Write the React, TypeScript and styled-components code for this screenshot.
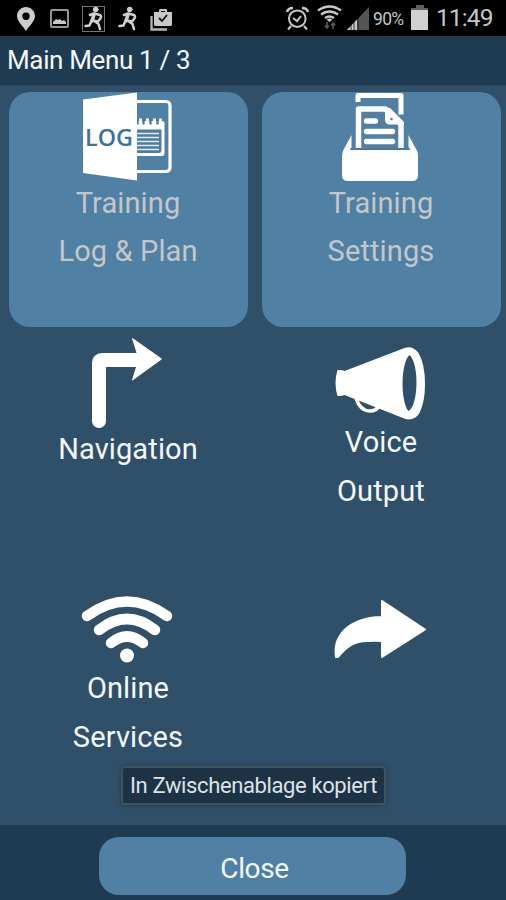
import React from "react";
import styled, { createGlobalStyle } from "styled-components";

const GlobalStyle = createGlobalStyle`
  * { box-sizing: border-box; }
  body { margin: 0; background: #2f5068; }
`;

const Screen = styled.div`
  position: relative;
  display: flex;
  flex-direction: column;
  width: 506px;
  height: 900px;
  overflow: hidden;
  background: #2f5068;
  color: #f4f8fc;
  font-family: Roboto, "Liberation Sans", sans-serif;
`;

const StatusBar = styled.header`
  display: flex;
  justify-content: space-between;
  height: 36px;
  background: #000;
  color: #c6c6c6;
`;

const StatusIcons = styled.svg`
  display: block;
  flex: none;
  height: 36px;
`;

const StatusGroup = styled.div`
  display: flex;
  align-items: center;
  padding-right: 13px;
`;

const BatteryLevel = styled.span`
  width: 34px;
  font-size: 17.5px;
  line-height: 36px;
  letter-spacing: -0.7px;
  padding-top: 2px;
`;

const Clock = styled.span`
  width: 57px;
  font-size: 24.5px;
  line-height: 36px;
  letter-spacing: -0.9px;
  white-space: nowrap;
`;

const TitleBar = styled.h1`
  height: 50px;
  margin: 0;
  padding-left: 7px;
  background: #1e3b52;
  border-bottom: 1px solid #28465d;
  font-size: 26px;
  font-weight: 400;
  line-height: 49px;
  letter-spacing: -0.35px;
`;

const MenuGrid = styled.main`
  display: grid;
  flex: 1;
  grid-template-columns: 239px 239px;
  grid-template-rows: repeat(3, 235px);
  gap: 11px 14px;
  padding: 6px 0 0 9px;
  overflow: hidden;
`;

const Tile = styled.button<{ $raised?: boolean }>`
  display: flex;
  flex-direction: column;
  align-items: center;
  padding: 0;
  border: 0;
  border-radius: 21px;
  background: ${(p) => (p.$raised ? "#5080a4" : "transparent")};
  color: ${(p) => (p.$raised ? "#c3c7ca" : "#f4f8fc")};
  font: inherit;
`;

const TileIcon = styled.svg`
  display: block;
  flex: none;
  width: 92px;
  margin-right: 1px;
  overflow: visible;
`;

const LabelGroup = styled.span<{ $gap?: number }>`
  display: flex;
  flex-direction: column;
  align-items: center;
  gap: ${(p) => p.$gap ?? 0}px;
  padding-top: 1px;
  margin-right: 1px;
`;

const Label = styled.span`
  font-size: 29px;
  line-height: 48px;
  letter-spacing: 0.12px;
  white-space: nowrap;
`;

const Footer = styled.footer`
  display: flex;
  justify-content: center;
  height: 75px;
  padding: 12px 0 5px;
  background: #1e3b52;
`;

const CloseButton = styled.button`
  width: 307px;
  height: 58px;
  margin-right: 2px;
  border: 0;
  border-radius: 20px;
  background: #5080a4;
  color: #f4f8fc;
  font: 400 28px/62px Roboto, "Liberation Sans", sans-serif;
  letter-spacing: -0.4px;
  padding: 1px 0 0 5px;
`;

const Toast = styled.div`
  position: absolute;
  left: 121px;
  top: 766px;
  width: 265px;
  height: 39px;
  border: 2px solid #3f5260;
  border-radius: 4px;
  background: #1d3345;
  color: #dce2e8;
  box-shadow: 0 0 4px rgba(18, 37, 51, 0.45);
  font-size: 22px;
  line-height: 36px;
  letter-spacing: -0.38px;
  text-align: center;
  white-space: nowrap;
`;

const Runner = () => (
  <g fill="none" stroke="#d0d0d0" strokeLinecap="round" strokeLinejoin="round">
    <circle cx="95.700" cy="9.500" r="2.400" fill="#d0d0d0" strokeWidth="1" />
    <path d="M94 14.500 92 21" strokeWidth="3.600" />
    <path d="M90 15l4-1.500 6 1.500q2 2 0 4l-2 2.500-5-1M91.500 20.500 89.500 25.500l-4 .5M95 21.500l3.500 2.500 1.500 5" strokeWidth="2.500" />
  </g>
);

const StatusLeft = () => (
  <StatusIcons width="180" viewBox="0 0 180 36">
    <path
      fill="#cccccc"
      fillRule="evenodd"
      d="M26 7c-5 0-9 4-9 9 0 5 5 9 9 15 4-6 9-10 9-15 0-5-4-9-9-9Zm0 5.500a3.700 3.700 0 1 1 0 7.400 3.700 3.700 0 0 1 0-7.400Z"
    />
    <rect x="51" y="10" width="17" height="17" rx="1" fill="none" stroke="#969696" strokeWidth="2" />
    <path fill="#c8c8c8" d="M53 24v-2l3-3 2 1 2-1 2 2 2-1 2 2v2Z" />
    <rect x="82.500" y="6.500" width="22" height="25" fill="none" stroke="#737373" />
    <Runner />
    <g transform="translate(34 0)"><Runner /></g>
    <path d="M151.500 16v13.500H167" fill="none" stroke="#b5b5b5" strokeWidth="2.300" />
    <path
      fill="#c8c8c8"
      fillRule="evenodd"
      d="M154 12h5v-2l1-1h6l1 1v2h5v13l-1 1h-16l-1-1Zm7-1v1h4v-1Z"
    />
    <path d="m159 18 3 3 5-6" fill="none" stroke="#111" strokeWidth="1.800" />
  </StatusIcons>
);

const StatusRight = () => (
  <StatusIcons width="90" viewBox="283 0 90 36">
    <g fill="none" stroke="#c8c8c8" strokeWidth="2">
      <circle cx="297.300" cy="18.700" r="8.300" />
      <path d="m293 18 4 3 4-5m-10 10-3 3.500m16-3.500 3 3.500" />
      <path d="M287 12q1-4 6-4m9 0q5 0 6 4" strokeWidth="2.500" />
    </g>
    <g fill="none" stroke="#c8c8c8" strokeWidth="2.300">
      <path d="M318 10.500q11.500-8 23 0M321 14.500q8.500-6 17 0M325 18q4.500-3 9 0" />
    </g>
    <path fill="#c8c8c8" d="m326.500 19.500 3 2.500 3-2.500q-3-2-6 0Z" />
    <path d="M327 22v6m-2-2.500 2 2.500 2-2.500M333 29v-6m-2 2.500 2-2.500 2 2.500" fill="none" stroke="#565656" strokeWidth="1.700" />
    <path fill="#555555" d="M347 30 369 7v23Z" />
    <path fill="#c8c8c8" d="M347 30 357 19.500V30Z" />
    <path stroke="#111" strokeWidth=".8" d="M351 24v6m3-10v10m4-14v14" />
  </StatusIcons>
);

const Battery = () => (
  <StatusIcons width="29" viewBox="407 0 29 36">
    <path fill="#606060" d="M416 5h8v3h4v4h-17V8h5Z" />
    <path fill="#d0d0d0" d="M411 10h17v20h-17Z" />
  </StatusIcons>
);

const LogIcon = () => (
  <TileIcon height="86" viewBox="82 92 92 86">
    <rect x="127" y="101.500" width="43" height="70" rx="4" fill="none" stroke="#fff" strokeWidth="3.200" />
    <path fill="#fff" d="M136 121h26q2.500 0 2.500 2v30q0 3-3 3H136Z" />
    <path fill="#4b7da2" d="M136 129.500h25.500V150q0 3-3 3H136Z" />
    <path d="M137 133.500h22m-22 4h22m-22 4h22m-22 4h22m-22 4h22" stroke="#e6eff6" strokeWidth="1.500" />
    <path d="M137.500 119.500v5m6-5v5m7-5v5m7-5v5" stroke="#44769b" strokeWidth="2.200" />
    <path d="M140.500 118.500v4m7-4v4m7-4v4m6-4v4" stroke="#fff" strokeWidth="2.800" />
    <path fill="#fff" d="m83 99.500 54-7v88L83 173Z" />
    <text x="85" y="146" fill="#397499" fontFamily="Open Sans, sans-serif" fontWeight="600" fontSize="23" textLength="48" lengthAdjust="spacingAndGlyphs">LOG</text>
  </TileIcon>
);

const TrayIcon = () => (
  <TileIcon height="86" viewBox="335 92 92 86">
    <g fill="none" stroke="#fff" strokeLinejoin="round">
      <path d="M358 102v-6.500h43v19" strokeWidth="5" />
      <path d="M358.500 150v-41h27l15.500 15v26" strokeWidth="5.500" />
      <path d="M366.500 121h9m-9 10.500h26M366.500 141.500h26" strokeWidth="5.300" strokeLinecap="round" />
    </g>
    <path fill="#fff" d="M385 108h5l14 14v2.500h-14q-5 0-5-5Z" />
    <circle cx="391.500" cy="119" r="1.300" fill="#5080a4" />
    <path fill="#fff" d="M351.500 135v13l-1 2h60l-2-3v-12l7 13q2.500 3 2.500 8v19q0 6-6 6h-64q-6 0-6-6v-19q0-5 3-9Z" />
    <path d="M350.500 149h58" stroke="#4879a0" strokeWidth="2" />
  </TileIcon>
);

const TurnIcon = () => (
  <TileIcon height="86" viewBox="82 338 92 86">
    <path d="M99 421v-58q0-3 3-3h39" fill="none" stroke="#fff" strokeWidth="14" strokeLinecap="round" />
    <path fill="#fff" stroke="#fff" strokeLinejoin="round" d="m132.500 338.500 29 20.500-29 21 6.500-21Z" />
  </TileIcon>
);

const MegaphoneIcon = () => (
  <TileIcon height="79" viewBox="335 338 92 79">
    <path d="M356 398q4 13 14 13 6 0 9-5" fill="none" stroke="#fff" strokeWidth="3.500" />
    <path
      fill="#fff"
      fillRule="evenodd"
      d="M337.500 370h4l3 1 60-23q8-3 14 5 6.500 11 6.500 31 0 18-5.500 29-5 8-14 6l-61-24-3 1h-4q-4-13 0-26Zm72-15c-9 8-9 47-1 56 10-5 11-47 1-56Z"
    />
  </TileIcon>
);

const OnlineIcon = () => (
  <TileIcon height="79" viewBox="82 584 92 79">
    <g fill="none" stroke="#fff" strokeWidth="10.500" strokeLinecap="round">
      <path d="M87 616q40-29 80 0M99 630q28-22 56 0M111 643q16-13 32 0" />
    </g>
    <circle cx="127" cy="655.500" r="7" fill="#fff" />
  </TileIcon>
);

const ShareIcon = () => (
  <TileIcon height="80" viewBox="335 584 92 80">
    <path
      fill="#fff"
      stroke="#fff"
      strokeWidth="2"
      strokeLinejoin="round"
      d="M382 601 425 629.500 382 657v-16c-25-1-32 1-44 16h-2c-3-19 10-39 46-40Z"
    />
  </TileIcon>
);

export default function App() {
  return (
    <>
      <GlobalStyle />
      <Screen>
        <StatusBar>
          <StatusLeft />
          <StatusGroup>
            <StatusRight />
            <BatteryLevel>90%</BatteryLevel>
            <Battery />
            <Clock>11:49</Clock>
          </StatusGroup>
        </StatusBar>
        <TitleBar>Main Menu 1 / 3</TitleBar>
        <MenuGrid>
          <Tile $raised>
            <LogIcon />
            <LabelGroup>
              <Label>Training</Label>
              <Label>Log &amp; Plan</Label>
            </LabelGroup>
          </Tile>
          <Tile $raised>
            <TrayIcon />
            <LabelGroup>
              <Label>Training</Label>
              <Label>Settings</Label>
            </LabelGroup>
          </Tile>
          <Tile>
            <TurnIcon />
            <LabelGroup>
              <Label>Navigation</Label>
            </LabelGroup>
          </Tile>
          <Tile>
            <MegaphoneIcon />
            <LabelGroup $gap={1}>
              <Label>Voice</Label>
              <Label>Output</Label>
            </LabelGroup>
          </Tile>
          <Tile>
            <OnlineIcon />
            <LabelGroup $gap={1}>
              <Label>Online</Label>
              <Label>Services</Label>
            </LabelGroup>
          </Tile>
          <Tile aria-label="Share">
            <ShareIcon />
          </Tile>
        </MenuGrid>
        <Footer>
          <CloseButton>Close</CloseButton>
        </Footer>
        <Toast role="status">In Zwischenablage kopiert</Toast>
      </Screen>
    </>
  );
}
